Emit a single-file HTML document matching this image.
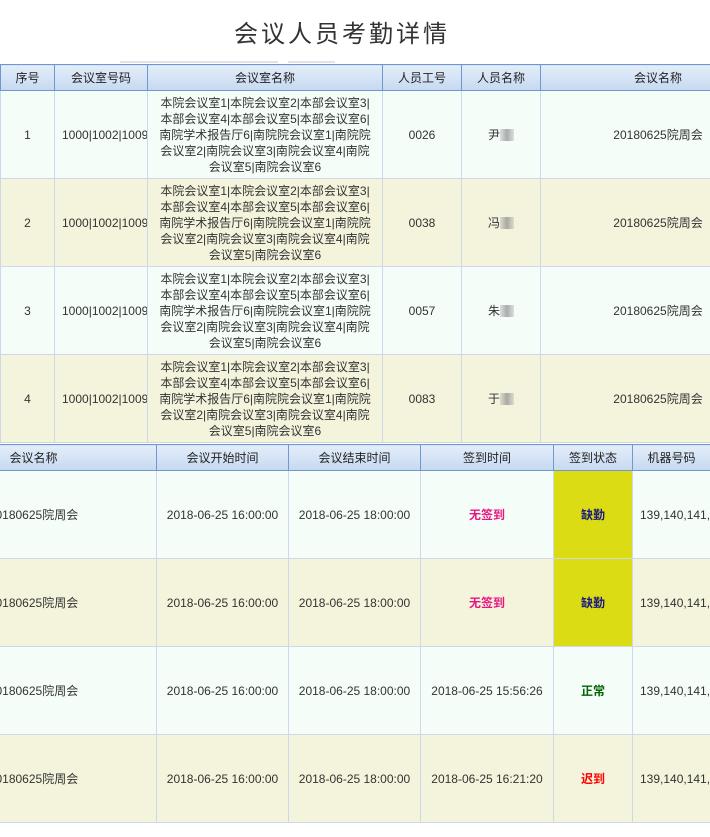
<!DOCTYPE html>
<html><head><meta charset="utf-8"><style>
html,body{margin:0;padding:0;width:710px;height:837px;overflow:hidden;background:#fff;font-family:"Liberation Sans","Noto Sans CJK SC",sans-serif;}
#wrap{position:absolute;left:0;top:0;width:710px;height:837px;overflow:hidden;}
h1{position:absolute;top:14px;left:0;width:684px;margin:0;text-align:center;font-weight:normal;font-size:24px;letter-spacing:3px;color:#333;}
table{position:absolute;border-collapse:collapse;table-layout:fixed;font-size:12px;color:#333;}
th{height:25px;padding:0;font-weight:normal;background:linear-gradient(#e4edf9,#c6d9f1);border:1px solid #6f97d0;color:#222;white-space:nowrap;overflow:hidden;}
td{height:87px;border:1px solid #cfd8e8;text-align:center;padding:0;line-height:16px;overflow:hidden;}
td.names{padding:0 11px;}
tr.o td{background:#f4fdf8;}
tr.e td{background:#f4f3dc;}
td.nw{white-space:nowrap;text-align:left;padding-left:7px;}
td.mach{text-align:left;padding-left:7px;white-space:nowrap;overflow:visible;}
.q{background:#dcdc14 !important;color:#1a1a80;font-weight:bold;}
.m{color:#e8157e;font-weight:bold;}
.g{color:#006400;font-weight:bold;}
.r{color:#ff0000;font-weight:bold;}
.blur{display:inline-block;width:14px;height:12px;background:linear-gradient(90deg,#ccc,#777,#ccc);vertical-align:middle;opacity:.6}
.line{position:absolute;top:61px;height:2px;background:#e0e4ea;}
</style></head><body><div id="wrap">
<h1>会议人员考勤详情</h1>
<div class="line" style="left:120px;width:158px"></div>
<div class="line" style="left:288px;width:47px"></div>
<table style="left:0;top:64px;width:775px">
<colgroup><col style="width:54px"><col style="width:93px"><col style="width:235px"><col style="width:79px"><col style="width:79px"><col style="width:235px"></colgroup>
<tr><th>序号</th><th>会议室号码</th><th>会议室名称</th><th>人员工号</th><th>人员名称</th><th>会议名称</th></tr>
<tr class="o"><td>1</td><td class="nw">1000|1002|1009|</td><td class="names">本院会议室1|本院会议室2|本部会议室3|本部会议室4|本部会议室5|本部会议室6|南院学术报告厅6|南院院会议室1|南院院会议室2|南院会议室3|南院会议室4|南院会议室5|南院会议室6</td><td>0026</td><td>尹<span class="blur"></span></td><td>20180625院周会</td></tr>
<tr class="e"><td>2</td><td class="nw">1000|1002|1009|</td><td class="names">本院会议室1|本院会议室2|本部会议室3|本部会议室4|本部会议室5|本部会议室6|南院学术报告厅6|南院院会议室1|南院院会议室2|南院会议室3|南院会议室4|南院会议室5|南院会议室6</td><td>0038</td><td>冯<span class="blur"></span></td><td>20180625院周会</td></tr>
<tr class="o"><td>3</td><td class="nw">1000|1002|1009|</td><td class="names">本院会议室1|本院会议室2|本部会议室3|本部会议室4|本部会议室5|本部会议室6|南院学术报告厅6|南院院会议室1|南院院会议室2|南院会议室3|南院会议室4|南院会议室5|南院会议室6</td><td>0057</td><td>朱<span class="blur"></span></td><td>20180625院周会</td></tr>
<tr class="e"><td>4</td><td class="nw">1000|1002|1009|</td><td class="names">本院会议室1|本院会议室2|本部会议室3|本部会议室4|本部会议室5|本部会议室6|南院学术报告厅6|南院院会议室1|南院院会议室2|南院会议室3|南院会议室4|南院会议室5|南院会议室6</td><td>0083</td><td>于<span class="blur"></span></td><td>20180625院周会</td></tr>
</table>
<table style="left:-90px;top:444px;width:800px">
<colgroup><col style="width:246px"><col style="width:132px"><col style="width:132px"><col style="width:133px"><col style="width:79px"><col style="width:78px"></colgroup>
<tr><th>会议名称</th><th>会议开始时间</th><th>会议结束时间</th><th>签到时间</th><th>签到状态</th><th>机器号码</th></tr>
<tr class="o"><td>20180625院周会</td><td>2018-06-25 16:00:00</td><td>2018-06-25 18:00:00</td><td class="m">无签到</td><td class="q">缺勤</td><td class="mach">139,140,141,142,143</td></tr>
<tr class="e"><td>20180625院周会</td><td>2018-06-25 16:00:00</td><td>2018-06-25 18:00:00</td><td class="m">无签到</td><td class="q">缺勤</td><td class="mach">139,140,141,142,143</td></tr>
<tr class="o"><td>20180625院周会</td><td>2018-06-25 16:00:00</td><td>2018-06-25 18:00:00</td><td>2018-06-25 15:56:26</td><td class="g">正常</td><td class="mach">139,140,141,142,143</td></tr>
<tr class="e"><td>20180625院周会</td><td>2018-06-25 16:00:00</td><td>2018-06-25 18:00:00</td><td>2018-06-25 16:21:20</td><td class="r">迟到</td><td class="mach">139,140,141,142,143</td></tr>
</table>
</div></body></html>
